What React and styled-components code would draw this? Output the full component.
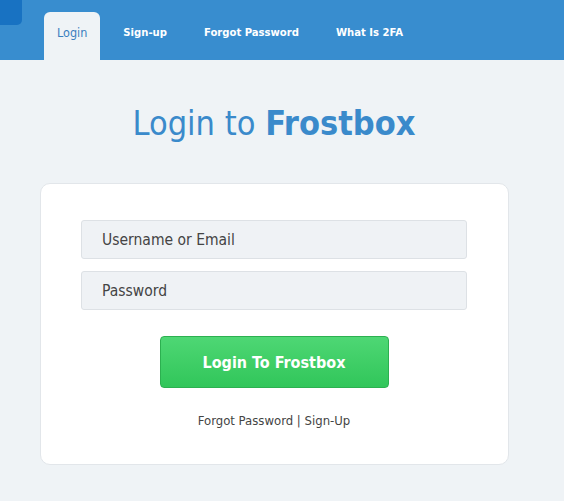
import React from "react";
import styled, { createGlobalStyle } from "styled-components";

const GlobalStyle = createGlobalStyle`
  html, body {
    margin: 0;
    padding: 0;
    background: #eff3f6;
    font-family: "DejaVu Sans Condensed", "DejaVu Sans", Verdana, sans-serif;
  }
`;

const Page = styled.div`
  min-height: 100vh;
  background: #eff3f6;
`;

const Header = styled.header`
  position: relative;
  height: 60px;
  background: #388dcf;
  display: flex;
  align-items: flex-end;
  padding-left: 44px;
`;

const Corner = styled.div`
  position: absolute;
  left: 0;
  top: 0;
  width: 22px;
  height: 25px;
  background: #1872c2;
  border-bottom-right-radius: 5px;
`;

const Tabs = styled.nav`
  display: flex;
  gap: 9px;
`;

const Tab = styled.a`
  display: flex;
  align-items: center;
  justify-content: center;
  height: 48px;
  padding: 0 ${(p) => (p.active ? "13px" : "14px")} 8px;
  box-sizing: border-box;
  border-radius: 6px 6px 0 0;
  font-size: ${(p) => (p.active ? "12.5px" : "11.2px")};
  font-weight: ${(p) => (p.active ? "normal" : "bold")};
  color: ${(p) => (p.active ? "#3a7fbf" : "#fff")};
  background: ${(p) => (p.active ? "#eff3f6" : "transparent")};
  text-decoration: none;
  cursor: pointer;
`;

const Main = styled.main`
  display: flex;
  flex-direction: column;
  align-items: center;
  padding: 38px 16px 0 0;
`;

const Title = styled.h1`
  margin: 0 0 35px;
  font-size: 34px;
  font-weight: normal;
  color: #3a8acb;
  line-height: 50px;

  b {
    font-weight: bold;
  }
`;

const Card = styled.div`
  box-sizing: border-box;
  width: 469px;
  background: #fff;
  border: 1px solid #e2e6ea;
  border-radius: 10px;
  padding: 36px 40px 36px;
  display: flex;
  flex-direction: column;
  align-items: center;
`;

const Input = styled.input`
  box-sizing: border-box;
  width: 386px;
  height: 39px;
  margin-bottom: 12px;
  padding: 0 20px;
  background: #eff2f5;
  border: 1px solid #dde1e5;
  border-radius: 3px;
  font-family: inherit;
  font-size: 15.5px;
  color: #444;
  outline: none;

  &::placeholder {
    color: #444;
  }
`;

const Button = styled.button`
  box-sizing: border-box;
  width: 229px;
  height: 52px;
  margin-top: 14px;
  background: linear-gradient(#4ed774, #31c65a);
  border: 1px solid #2cb050;
  border-radius: 4px;
  color: #fff;
  font-family: inherit;
  font-size: 16px;
  font-weight: bold;
  cursor: pointer;
`;

const Links = styled.div`
  margin-top: 25px;
  font-size: 13px;
  color: #444;

  a {
    color: #444;
    text-decoration: none;
  }
`;

export default function App() {
  return (
    <Page>
      <GlobalStyle />
      <Header>
        <Corner />
        <Tabs>
          <Tab active>Login</Tab>
          <Tab>Sign-up</Tab>
          <Tab>Forgot Password</Tab>
          <Tab>What Is 2FA</Tab>
        </Tabs>
      </Header>
      <Main>
        <Title>
          Login to <b>Frostbox</b>
        </Title>
        <Card>
          <Input placeholder="Username or Email" />
          <Input type="password" placeholder="Password" />
          <Button>Login To Frostbox</Button>
          <Links>
            <a>Forgot Password</a> | <a>Sign-Up</a>
          </Links>
        </Card>
      </Main>
    </Page>
  );
}
